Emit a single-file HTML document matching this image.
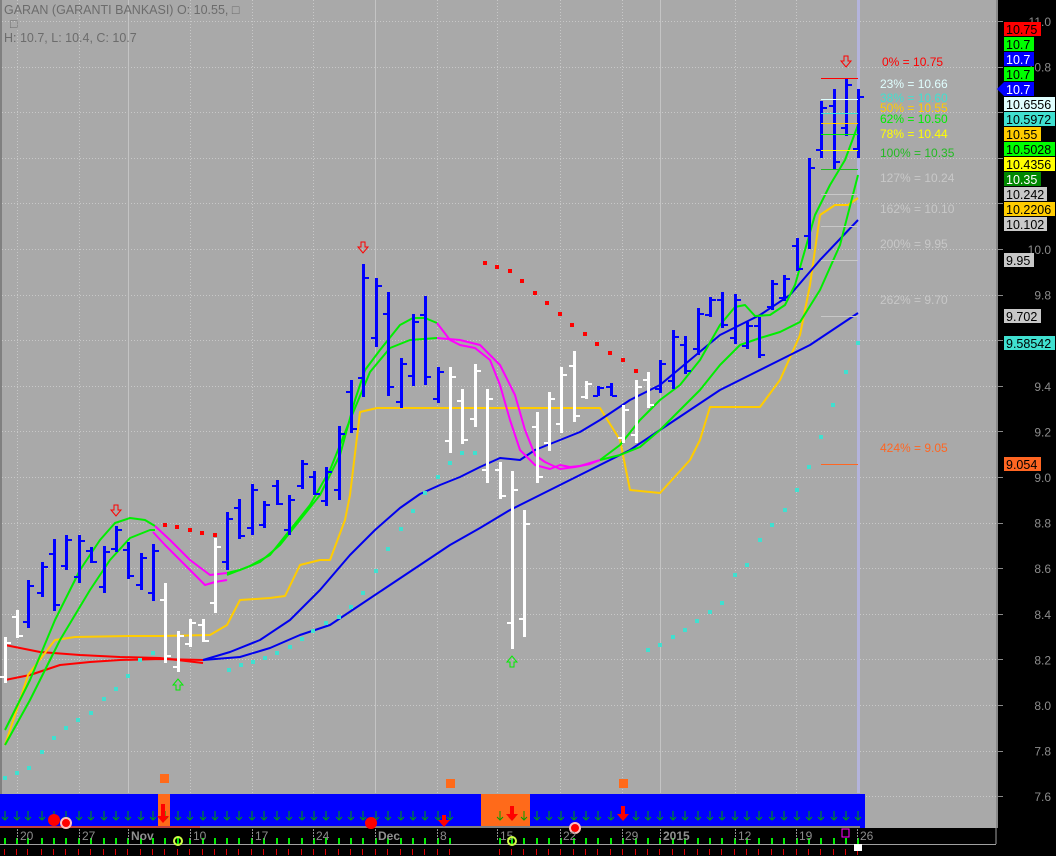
<!DOCTYPE html>
<html><head><meta charset="utf-8"><style>
html,body{margin:0;padding:0;background:#000;}
#c{position:relative;width:1056px;height:856px;overflow:hidden;background:#000;font-family:"Liberation Sans",sans-serif;}
svg{position:absolute;left:0;top:0;}
.t{font-family:"Liberation Sans",sans-serif;}
</style></head><body><div id="c">
<svg id="s" width="1056" height="856" xmlns="http://www.w3.org/2000/svg">
<rect x="0" y="0" width="996" height="828" fill="#a9a9a9"/>
<rect x="0" y="0" width="2" height="828" fill="#808080"/>
<g id="grid"></g>
<g id="lines" fill="none" stroke-width="2" stroke-linejoin="round"></g>
<g id="bars"></g>
<g id="dots"></g>
<g id="fib"></g>
<rect x="996" y="0" width="2" height="828" fill="#8a8a8a"/>
<g id="axis"></g>
<g id="bottom"></g>
<text x="4" y="14" font-size="12.5" fill="#6c6c6c" class="t">GARAN (GARANTI BANKASI) O: 10.55, □</text>
<text x="10" y="28" font-size="12.5" fill="#6c6c6c" class="t">□</text>
<text x="4" y="42" font-size="12.5" fill="#6c6c6c" class="t">H: 10.7, L: 10.4, C: 10.7</text>
</svg>
</div>
<script>
var NS="http://www.w3.org/2000/svg";
function el(p,tag,a,txt){var e=document.createElementNS(NS,tag);for(var k in a)e.setAttribute(k,a[k]);if(txt!==undefined)e.textContent=txt;document.getElementById(p).appendChild(e);return e;}
function Y(p){return 21+(11-p)*228;}
// grid
for(var p=7.6;p<=11.01;p+=0.2){var y=Math.round(Y(p))+0.5;el('grid','line',{x1:2,x2:996,y1:y,y2:y,stroke:'#c8c8c8','stroke-dasharray':'1,2'});}
[17,79,190,252,313,437,497,560,622,735,796].forEach(function(x){el('grid','line',{x1:x+.5,x2:x+.5,y1:0,y2:828,stroke:'#c8c8c8','stroke-dasharray':'1,2'});});
[128,375,660].forEach(function(x){el('grid','line',{x1:x+.5,x2:x+.5,y1:0,y2:793,stroke:'#c4c4c4'});});
el('grid','rect',{x:857,y:0,width:3,height:793,fill:'#b4b4dc'});
// lines
function pl(c,pts){el('lines','polyline',{points:pts,stroke:c});}
pl('#ff0000','5,645 40,652 80,655 120,657 160,658 203,663');
pl('#ff0000','5,680 30,675 60,665 90,662 120,660 160,659 203,660');
pl('#ffcc00','5,745 20,700 28,675 55,640 75,637 130,636 160,636 210,635 227,625 240,600 270,598 285,596 300,565 320,560 330,560 345,520 350,495 360,412 377,408 600,408 620,440 630,490 660,493 690,460 700,440 710,407 760,407 780,380 800,335 810,285 820,215 835,205 848,205 858,198');
pl('#0000ee','203,660 230,652 260,640 290,620 320,590 350,555 375,530 400,508 420,494 440,485 460,477 480,467 500,458 520,460 535,450 560,440 580,432 600,420 630,400 660,385 690,360 720,335 760,315 790,295 820,260 858,220');
pl('#0000ee','203,660 240,657 270,648 300,635 330,625 360,605 390,585 420,565 450,545 480,528 510,510 530,500 560,485 600,465 630,450 660,430 690,410 720,390 750,375 780,360 810,345 840,325 858,313');
pl('#00ee00','5,730 30,680 55,620 80,570 100,540 115,523 130,518 145,520 155,526');
pl('#ff00ff','155,526 170,540 190,560 210,575 227,573');
pl('#00ee00','227,573 240,570 260,562 280,545 300,520 320,495 340,455 355,400 365,370 380,350 400,325 413,318 425,318 437,323');
pl('#ff00ff','437,323 450,340 460,345 475,348 490,360 500,385 510,420 520,450 535,465 550,469 560,465 570,467 580,466 600,460');
pl('#00ee00','600,460 620,445 640,420 660,400 680,385 700,360 720,325 735,307 745,305 755,316 770,315 785,305 795,285 805,250 815,215 830,185 845,160 858,125');
pl('#00ee00','5,745 30,700 60,640 90,590 110,560 130,538 150,530 155,530');
pl('#ff00ff','153,532 165,545 180,560 195,575 205,585 215,582 227,580');
pl('#00ee00','227,575 250,566 270,555 290,530 310,505 330,470 350,420 370,372 390,348 410,340 437,338');
pl('#ff00ff','437,338 460,340 480,345 500,365 515,395 525,430 535,455 545,462 560,469 575,467 590,464 600,460');
pl('#00ee00','600,460 620,455 640,447 660,430 680,410 700,390 720,365 740,345 760,338 780,332 800,322 820,290 840,245 858,175');
// bars [x,hi,lo,white]
var B=[[5,637,683,1],[17,610,638,1],[28,580,628],[42,562,597],[54,539,611],[66,535,570],[79,535,583],[91,547,563],[104,546,593],[116,526,552],[128,542,579],[141,553,590],[153,544,601],[165,583,663,1],[178,631,672,1],[190,619,647,1],[203,619,642,1],[215,538,613,1],[227,512,570],[239,499,539],[252,484,535],[264,501,528],[277,480,505],[289,495,535],[302,460,489],[314,471,495],[326,467,506],[339,426,500],[351,380,433],[363,264,397],[376,278,347],[388,292,396],[401,358,408],[413,314,386],[425,296,385],[438,367,403],[450,367,453,1],[462,389,444,1],[475,364,427,1],[487,389,483,1],[500,462,499,1],[512,471,649,1],[524,510,637,1],[537,412,483,1],[549,392,451,1],[561,367,433,1],[574,351,422,1],[586,381,399,1],[598,386,396],[611,383,396],[623,405,443,1],[636,380,443,1],[648,372,408,1],[660,360,393],[673,330,389],[685,336,374],[698,308,355],[710,297,317],[722,292,328],[735,294,344],[747,322,349],[759,317,358],[772,280,310],[784,275,301],[797,238,271],[809,158,249],[821,101,158],[834,89,169],[846,78,136],[858,89,158]];
B.forEach(function(b,i){var c=b[3]?'#ffffff':'#0000ff';var x=b[0],h=b[1],l=b[2];var up=(i%3!=1);
var o=up?l-(l-h)*0.15:h+(l-h)*0.2, cl=up?h+(l-h)*0.1:l-(l-h)*0.1;
el('bars','rect',{x:x-1,y:h,width:3,height:l-h,fill:c});
el('bars','rect',{x:x-5,y:Math.round(o),width:5,height:2,fill:c});
el('bars','rect',{x:x+1,y:Math.round(cl),width:5,height:2,fill:c});});
// cyan dots
var C=[[5,778],[17,773],[29,768],[42,752],[54,738],[66,728],[78,720],[91,713],[104,699],[116,689],[128,676],[140,660],[153,653],[229,670],[241,665],[253,662],[265,658],[277,653],[290,647],[302,639],[313,631],[326,623],[339,617],[351,607],[363,593],[376,571],[388,549],[401,529],[413,511],[425,493],[438,477],[450,463],[462,453],[475,453],[648,650],[660,645],[673,637],[685,630],[697,621],[710,612],[722,603],[735,575],[747,565],[760,540],[772,525],[785,510],[797,490],[809,467],[821,437],[833,405],[846,372],[858,343]];
C.forEach(function(d){el('dots','rect',{x:d[0]-2,y:d[1]-2,width:4,height:4,fill:'#40e0d0'});});
[[165,525],[177,527],[190,530],[202,533],[215,535],[485,263],[497,267],[510,271],[522,281],[535,293],[547,303],[560,314],[572,325],[585,334],[597,344],[610,353],[623,360],[636,371]].forEach(function(d){el('dots','rect',{x:d[0]-2,y:d[1]-2,width:4,height:4,fill:'#ff0000'});});
function darr(x,y){el('dots','path',{d:'M'+(x-2)+','+y+'h4v5h3l-5,6l-5,-6h3z',fill:'none',stroke:'#ff0000','stroke-width':1});}
function uarr(x,y){el('dots','path',{d:'M'+(x-2)+','+(y+11)+'h4v-5h3l-5,-6l-5,6h3z',fill:'none',stroke:'#00ee00','stroke-width':1});}
darr(116,505);darr(363,242);darr(846,56);uarr(178,679);uarr(512,656);
// fib
var F=[[78,'#ff0000','0% = 10.75',62],[99,'#e0ffff','23% = 10.66',84],[113,'#40e0d0','38% = 10.60',98],[123,'#ffcc00','50% = 10.55',108],[134,'#00ee00','62% = 10.50',119],[150,'#ffff00','78% = 10.44',134],[169,'#22bb22','100% = 10.35',153],[194,'#c8c8c8','127% = 10.24',178],[226,'#c8c8c8','162% = 10.10',209],[260,'#c8c8c8','200% = 9.95',244],[316,'#c8c8c8','262% = 9.70',300],[464,'#ff6622','424% = 9.05',448]];
F.forEach(function(f){el('fib','line',{x1:821,x2:858,y1:f[0]+.5,y2:f[0]+.5,stroke:f[1]});el('fib','text',{x:f[3]==62?882:880,y:f[3]+4,'font-size':12,fill:f[1],'class':'t'},f[2]);});
// axis
[[11.0,'11.0'],[10.8,'10.8'],[10.0,'10.0'],[9.8,'9.8'],[9.4,'9.4'],[9.2,'9.2'],[9.0,'9.0'],[8.8,'8.8'],[8.6,'8.6'],[8.4,'8.4'],[8.2,'8.2'],[8.0,'8.0'],[7.8,'7.8'],[7.6,'7.6']].forEach(function(a){var y=Y(a[0]);el('axis','text',{x:1051,y:y+5,'font-size':12,fill:'#8c8c8c','text-anchor':'end','class':'t'},a[1]);});
for(var p=7.6;p<=11.01;p+=0.2){var y=Math.round(Y(p))+0.5;el('axis','line',{x1:996,x2:1003,y1:y,y2:y,stroke:'#8a8a8a'});}
var L=[[22,'#ff0000','10.75',37,'#000'],[37,'#00ff00','10.7',30,'#000'],[52,'#0000ff','10.7',30,'#fff'],[67,'#00ff00','10.7',30,'#000'],[82,'#0000ff','10.7',30,'#fff'],[97,'#e0ffff','10.6556',51,'#000'],[112,'#40e0d0','10.5972',51,'#000'],[127,'#ffcc00','10.55',37,'#000'],[142,'#00ff00','10.5028',51,'#000'],[157,'#ffff00','10.4356',51,'#000'],[172,'#008800','10.35',37,'#fff'],[187,'#c8c8c8','10.242',43,'#000'],[202,'#ffcc00','10.2206',51,'#000'],[217,'#c8c8c8','10.102',43,'#000'],[253,'#c8c8c8','9.95',30,'#000'],[309,'#c8c8c8','9.702',37,'#000'],[336,'#40e0d0','9.58542',51,'#000'],[457,'#ff6622','9.054',37,'#000']];
L.forEach(function(l){el('axis','rect',{x:1004,y:l[0],width:l[3],height:14,fill:l[1]});el('axis','text',{x:1006,y:l[0]+12,'font-size':12.5,fill:l[4],'class':'t'},l[2]);});
el('axis','path',{d:'M997,89 L1004,82 L1004,96 Z',fill:'#0000ff'});
// bottom
var bt='bottom';
el(bt,'rect',{x:0,y:794,width:865,height:34,fill:'#0000ff'});
el(bt,'rect',{x:158,y:794,width:12,height:34,fill:'#ff6a1a'});
el(bt,'rect',{x:481,y:794,width:49,height:34,fill:'#ff6a1a'});
[[160,774],[446,779],[619,779]].forEach(function(s){el(bt,'rect',{x:s[0],y:s[1],width:9,height:9,fill:'#ff6a1a'});});
el(bt,'line',{x1:0,x2:860,y1:827,y2:827,stroke:'#808080','stroke-width':2});
el(bt,'line',{x1:0,x2:200,y1:827,y2:827,stroke:'#ff0000','stroke-width':1});
B.forEach(function(b,i){var x=b[0];if(x>460&&x<500)return;el(bt,'path',{d:'M'+x+',811v9M'+(x-3)+',817l3,3l3,-3',stroke:'#00a000',fill:'none','stroke-width':1});
el(bt,'rect',{x:x-1,y:838,width:2,height:7,fill:'#00ee00'});el(bt,'rect',{x:x-1,y:849,width:1,height:6,fill:'#dd0000'});});
function rarr(x,y,h){el(bt,'path',{d:'M'+(x-2)+','+y+'h4v'+h+'h4l-6,7l-6,-7h4z',fill:'#ff0000'});}
rarr(163,804,12);rarr(512,806,8);rarr(623,806,8);rarr(444,815,5);
el(bt,'circle',{cx:54,cy:820,r:6,fill:'#ff0000'});el(bt,'circle',{cx:371,cy:823,r:6,fill:'#ff0000'});
el(bt,'circle',{cx:66,cy:823,r:5,fill:'#ff0000',stroke:'#ffc0c0','stroke-width':2});
el(bt,'circle',{cx:575,cy:828,r:5,fill:'#ff0000',stroke:'#ffc0c0','stroke-width':2});
el(bt,'line',{x1:0,x2:996,y1:844.5,y2:844.5,stroke:'#a0a0a0'});
el(bt,'line',{x1:996,x2:996,y1:828,y2:844,stroke:'#a0a0a0'});
[[17,'20'],[79,'27'],[128,'Nov',1],[190,'10'],[252,'17'],[313,'24'],[375,'Dec',1],[437,'8'],[497,'15'],[560,'22'],[622,'29'],[660,'2015',1],[735,'12'],[796,'19'],[857,'26']].forEach(function(d){
el(bt,'line',{x1:d[0]+.5,x2:d[0]+.5,y1:829,y2:841,stroke:'#909090','stroke-dasharray':'2,1'});
var a={x:d[0]+3,y:840,'font-size':12,fill:'#8c8c8c','class':'t'};if(d[2]){a['font-weight']='bold';a.fill='#909090';}el(bt,'text',a,d[1]);});
el(bt,'circle',{cx:178,cy:841,r:4,fill:'none',stroke:'#ccff44','stroke-width':2});
el(bt,'circle',{cx:512,cy:841,r:4,fill:'none',stroke:'#ccff44','stroke-width':2});
el(bt,'rect',{x:842,y:829,width:7,height:8,fill:'none',stroke:'#ff00ff'});
el(bt,'rect',{x:854,y:844,width:8,height:7,fill:'#ffffff'});
</script>
</body></html>
